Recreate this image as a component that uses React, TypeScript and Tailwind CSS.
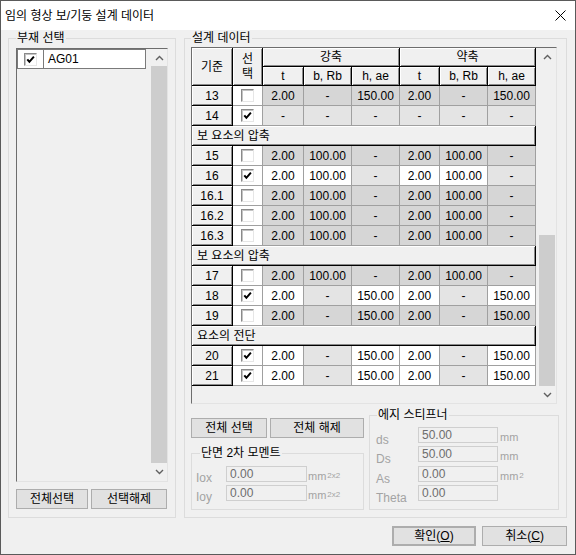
import React from 'react';

type Row =
    | { kind: 'section'; label: string }
    | { kind: 'row'; id: string; checked: boolean; values: string[] };

const A = ['2.00', '-', '150.00', '2.00', '-', '150.00'];
const B = ['2.00', '100.00', '-', '2.00', '100.00', '-'];

const rows: Row[] = [
    { kind: 'row', id: '13', checked: false, values: A },
    { kind: 'row', id: '14', checked: true, values: ['-', '-', '-', '-', '-', '-'] },
    { kind: 'section', label: '보 요소의 압축' },
    { kind: 'row', id: '15', checked: false, values: B },
    { kind: 'row', id: '16', checked: true, values: B },
    { kind: 'row', id: '16.1', checked: false, values: B },
    { kind: 'row', id: '16.2', checked: false, values: B },
    { kind: 'row', id: '16.3', checked: false, values: B },
    { kind: 'section', label: '보 요소의 압축' },
    { kind: 'row', id: '17', checked: false, values: B },
    { kind: 'row', id: '18', checked: true, values: A },
    { kind: 'row', id: '19', checked: false, values: A },
    { kind: 'section', label: '요소의 전단' },
    { kind: 'row', id: '20', checked: true, values: A },
    { kind: 'row', id: '21', checked: true, values: A },
];

const raised =
    'bg-[#f0f0f0] border-r border-b border-black shadow-[inset_1px_1px_0_#fff,inset_-1px_-1px_0_#8a8a8a]';
const btn = 'h-[20px] bg-[#e1e1e1] border border-[#adadad] flex items-center justify-center text-[12px] text-black';

const Check = ({ on }: { on: boolean }) => (
    <div className="w-[13px] h-[13px] bg-white border border-t-[#8a8a8a] border-l-[#8a8a8a] border-r-[#e6e6e6] border-b-[#e6e6e6] shadow-[inset_1px_1px_0_#c4c4c4] flex items-center justify-center">
        {on && (
            <svg width="9" height="9" viewBox="0 0 9 9">
                <path d="M1.3 4.3 L3.4 6.8 L7.9 1.6" fill="none" stroke="#000" strokeWidth="2" />
            </svg>
        )}
    </div>
);

const Chevron = ({ up }: { up?: boolean }) => (
    <svg width="9" height="6" viewBox="0 0 9 6">
        <path d={up ? 'M1 5 L4.5 1.5 L8 5' : 'M1 1 L4.5 4.5 L8 1'} fill="none" stroke="#606060" strokeWidth="1.4" />
    </svg>
);

const Scrollbar = ({ up, track, thumb, down }: { up: number; track: number; thumb: number; down: number }) => (
    <div className="w-[16px] flex flex-col bg-[#f0f0f0]">
        <div className="flex items-center justify-center" style={{ height: up }}>
            <Chevron up />
        </div>
        <div style={{ height: track }} />
        <div className="bg-[#cdcdcd]" style={{ height: thumb }} />
        <div className="flex items-center justify-center" style={{ height: down }}>
            <Chevron />
        </div>
    </div>
);

const GroupLabel = ({ text, ml }: { text: string; ml: string }) => (
    <div className={`-mt-[8px] ${ml} self-start px-px bg-[#f0f0f0] leading-[14px] text-[12px] text-black`}>{text}</div>
);

const cellBg = (checked: boolean, v: string) => {
    if (!checked) return 'bg-[#d6d6d6]';
    return v === '-' ? 'bg-[#e4e4e4]' : 'bg-white';
};

const Field = ({ label, value, unit, mt }: { label: string; value: string; unit?: React.ReactNode; mt: string }) => (
    <div className={`${mt} h-[16px] flex items-start pl-[6px]`}>
        <span className="w-[42px] mt-[5px] leading-[16px] text-[12px] text-[#a3a3a3]">{label}</span>
        <div className="w-[80px] h-[16px] border border-[#cfcfcf] bg-[#f0f0f0] pl-[3px] text-[12px] leading-[14px] text-[#6d6d6d]">
            {value}
        </div>
        {unit && <span className="ml-[2px] mt-[3px] leading-[14px] text-[11px] text-[#a3a3a3]">{unit}</span>}
    </div>
);

export default function App() {
    return (
        <div className="w-[576px] h-[555px] border border-[#5a5a5a] bg-[#f0f0f0] flex flex-col font-['Liberation_Sans','Noto_Sans_CJK_KR',sans-serif] text-[12px] text-black">
            {/* title bar */}
            <div className="h-[29px] bg-white flex items-center justify-between pl-[4px] pr-[9px]">
                <span className="text-[12px] leading-[14px]">임의 형상 보/기둥 설계 데이터</span>
                <svg width="11" height="11" viewBox="0 0 11 11">
                    <path d="M0.5 0.5 L10.5 10.5 M10.5 0.5 L0.5 10.5" stroke="#000" strokeWidth="1" />
                </svg>
            </div>

            <div className="flex items-start">
                {/* 부재 선택 */}
                <div className="ml-[7px] mt-[8px] w-[168px] h-[480px] border border-[#dcdcdc] flex flex-col">
                    <GroupLabel text="부재 선택" ml="ml-[7px]" />
                    <div className="mt-[3px] ml-[7px] w-[152px] h-[434px] border border-t-[#6d6d6d] border-l-[#6d6d6d] border-r-[#e3e3e3] border-b-[#e3e3e3] flex">
                        <div className="w-[134px]">
                            <div className="flex h-[20px] border border-[#7a7a7a] w-[129px]">
                                <div className="w-[26px] border-r border-[#7a7a7a] bg-white flex items-center justify-center">
                                    <Check on />
                                </div>
                                <div className="flex-1 bg-white pl-[4px] flex items-center text-[12px]">AG01</div>
                            </div>
                        </div>
                        <Scrollbar up={17} track={0} thumb={397} down={18} />
                    </div>
                    <div className="mt-[7px] ml-[7px] flex gap-[3px]">
                        <div className={`${btn} w-[72px]`}>전체선택</div>
                        <div className={`${btn} w-[76px]`}>선택해제</div>
                    </div>
                </div>

                {/* 설계 데이터 */}
                <div className="ml-[8px] mt-[8px] w-[383px] h-[480px] border border-[#dcdcdc] flex flex-col">
                    <GroupLabel text="설계 데이터" ml="ml-[6px]" />
                    <div className="mt-[2px] ml-[6px] w-[366px] h-[357px] border border-t-[#6d6d6d] border-l-[#6d6d6d] border-r-[#e3e3e3] border-b-[#e3e3e3] flex">
                        <div className="w-[347px]">
                            <div className="w-[344px] grid grid-cols-[41px_30px_41px_48px_48px_40px_48px_48px] grid-rows-[19px_19px] auto-rows-[20px]">
                                <div className={`${raised} row-span-2 flex items-center justify-center`}>기준</div>
                                <div className={`${raised} row-span-2 flex flex-col items-center justify-center leading-[15px]`}>
                                    <span>선</span>
                                    <span>택</span>
                                </div>
                                <div className={`${raised} col-span-3 flex items-center justify-center`}>강축</div>
                                <div className={`${raised} col-span-3 flex items-center justify-center`}>약축</div>
                                {['t', 'b, Rb', 'h, ae', 't', 'b, Rb', 'h, ae'].map((h, i) => (
                                    <div key={i} className={`${raised} flex items-center justify-center`}>
                                        {h}
                                    </div>
                                ))}
                                {rows.map((r, i) =>
                                    r.kind === 'section' ? (
                                        <div key={i} className={`${raised} col-span-8 flex items-center pl-[5px]`}>
                                            {r.label}
                                        </div>
                                    ) : (
                                        <React.Fragment key={i}>
                                            <div className={`${raised} flex items-center justify-center`}>{r.id}</div>
                                            <div className="bg-white border-r border-b border-[#a0a0a0] flex items-center justify-center">
                                                <Check on={r.checked} />
                                            </div>
                                            {r.values.map((v, j) => (
                                                <div
                                                    key={j}
                                                    className={`${cellBg(r.checked, v)} border-r border-b border-[#a0a0a0] flex items-center justify-center`}
                                                >
                                                    {v}
                                                </div>
                                            ))}
                                        </React.Fragment>
                                    )
                                )}
                            </div>
                        </div>
                        <Scrollbar up={17} track={170} thumb={151} down={17} />
                    </div>

                    <div className="ml-[6px] flex items-start">
                        <div className="w-[173px] flex flex-col">
                            <div className="mt-[14px] flex gap-[3px]">
                                <div className={`${btn} w-[76px]`}>전체 선택</div>
                                <div className={`${btn} w-[94px]`}>전체 해제</div>
                            </div>
                            <div className="mt-[15px] w-[173px] h-[57px] border border-[#dcdcdc] flex flex-col">
                                <GroupLabel text="단면 2차 모멘트" ml="ml-[8px]" />
                                {[
                                    ['Iox', 'mt-[6px]'],
                                    ['Ioy', 'mt-[3px]'],
                                ].map(([l, mt]) => (
                                    <div key={l} className={`${mt} h-[16px] flex items-start pl-[4px]`}>
                                        <span className="w-[30px] mt-[4px] leading-[16px] text-[12px] text-[#a3a3a3]">{l}</span>
                                        <div className="w-[81px] h-[16px] border border-[#cfcfcf] bg-[#f0f0f0] pl-[3px] text-[12px] leading-[14px] text-[#6d6d6d]">
                                            0.00
                                        </div>
                                        <span className="ml-[1px] mt-[3px] leading-[14px] text-[11px] text-[#a3a3a3]">
                                            mm<span className="ml-px text-[8px] align-top">2x2</span>
                                        </span>
                                    </div>
                                ))}
                            </div>
                        </div>

                        <div className="ml-[5px] mt-[11px] w-[190px] h-[95px] border border-[#dcdcdc] flex flex-col">
                            <GroupLabel text="에지 스티프너" ml="ml-[7px]" />
                            <Field label="ds" value="50.00" unit="mm" mt="mt-[5px]" />
                            <Field label="Ds" value="50.00" unit="mm" mt="mt-[3px]" />
                            <Field
                                label="As"
                                value="0.00"
                                unit={
                                    <>
                                        mm<span className="ml-px text-[8px] align-top">2</span>
                                    </>
                                }
                                mt="mt-[4px]"
                            />
                            <Field label="Theta" value="0.00" mt="mt-[3px]" />
                        </div>
                    </div>
                </div>
            </div>

            <div className="mt-[8px] flex justify-end gap-[6px] pr-[8px]">
                <div className={`${btn} w-[84px] border-2 border-[#0078d7]`}>
                    확인(<span className="underline">O</span>)
                </div>
                <div className={`${btn} w-[85px]`}>
                    취소(<span className="underline">C</span>)
                </div>
            </div>
        </div>
    );
}
